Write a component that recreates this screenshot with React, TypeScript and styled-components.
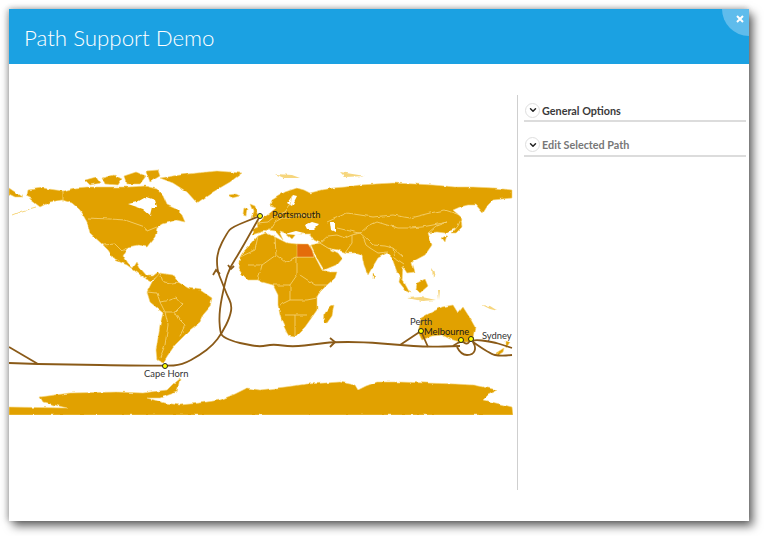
import styled, { createGlobalStyle } from "styled-components";
import { ChevronDown } from "lucide-react";

const GlobalStyle = createGlobalStyle`
  html, body {
    margin: 0;
    padding: 0;
    background: #fff;
    font-family: "Lato", "Liberation Sans", sans-serif;
  }
`;

const Page = styled.div`
  width: 764px;
  height: 536px;
  padding: 9px 15px 15px 9px;
  box-sizing: border-box;
  overflow: hidden;
`;

const Window = styled.div`
  width: 740px;
  height: 512px;
  background: #fff;
  display: flex;
  flex-direction: column;
  box-shadow: 4px 5px 9px rgba(0, 0, 0, 0.6), -3px 0 6px rgba(0, 0, 0, 0.16), 0 -2px 5px rgba(0, 0, 0, 0.12);
`;

const Header = styled.header`
  position: relative;
  height: 55px;
  flex: none;
  background: #1ba1e2;
  color: #fff;
  display: flex;
  align-items: center;
  padding: 1px 0 0 15px;
  box-sizing: border-box;
  overflow: hidden;
`;

const Title = styled.h1`
  margin: 0;
  font: 300 22.3px "Lato", sans-serif;
`;

const CloseCorner = styled.div`
  position: absolute;
  top: -27px;
  right: -27px;
  width: 54px;
  height: 54px;
  border-radius: 50%;
  background: #5fbcec;
  svg {
    position: absolute;
    left: 14px;
    top: 33px;
  }
`;

const Body = styled.div`
  flex: 1;
  display: flex;
  padding-top: 31px;
  padding-bottom: 31px;
`;

const MapColumn = styled.div`
  width: 508px;
  flex: none;
  padding-top: 70px;
  box-sizing: border-box;
`;

const MapArea = styled.div`
  position: relative;
  width: 504px;
  height: 250px;
  svg {
    display: block;
  }
`;

const PinLabel = styled.span<{ $x: number; $y: number; $dim?: boolean }>`
  position: absolute;
  left: ${({ $x }) => $x - 9}px;
  top: ${({ $y }) => $y - 165}px;
  font: 400 9.4px/12px "Lato", sans-serif;
  color: ${({ $dim }) => ($dim ? "#333" : "#1a1a1a")};
  white-space: nowrap;
`;

const SidePanel = styled.aside`
  flex: 1;
  border-left: 1px solid #cfcfcf;
  padding: 5px 3px 0 6px;
`;

const Section = styled.div`
  height: 34.5px;
`;

const SectionHead = styled.div<{ $muted?: boolean }>`
  display: flex;
  align-items: center;
  height: 20px;
  gap: 2px;
  border-bottom: 2px solid #dcdcdc;
  color: ${({ $muted }) => ($muted ? "#777" : "#3a3a3a")};
  font: 700 10.8px "Lato", sans-serif;
`;

const Toggle = styled.span`
  width: 13px;
  height: 13px;
  border: 1px solid #dedede;
  border-radius: 50%;
  display: flex;
  align-items: center;
  justify-content: center;
  color: #222;
  margin-left: 1px;
`;

const LAND = "#e1a100";
const COAST = "#f6d67e";
const ROUTE = "#8a5a18";

const land = [
  // north america
  "28,190 42,188 63,191 75,188 87,187 110,187 130,187 145,186 157,189 163,196 167,205 176,209 182,215 185,222 176,220 170,222 163,224 157,228 155,237 150,243 147,247 138,245 128,247 123,255 128,263 133,268 137,262 140,268 147,276 153,276 158,272 160,275 151,281 143,277 127,265 115,260 108,250 103,245 90,233 87,222 80,210 72,203 62,200 50,202 40,207 30,199 33,198 27,195",
  "9,188 15,192 23,197 15,197 9,194",
  // arctic islands
  "85,180 96,177 100,183 90,185",
  "102,178 114,175 122,179 118,185 105,184",
  "124,176 136,172 146,176 140,184 126,184",
  "146,171 158,170 160,176 150,182",
  // greenland
  "160,178 187,174 217,171 242,173 230,182 213,192 197,203 187,192 173,183",
  // south america
  "147,292 152,282 160,273 173,275 178,282 188,288 200,290 212,298 210,307 203,315 200,322 190,330 185,335 175,345 168,355 163,363 157,360 156,350 158,338 160,325 163,313 150,302",
  // africa
  "258,236 266,233 275,237 287,243 297,244 310,245 314,255 322,270 330,272 337,272 335,278 327,285 320,292 317,298 317,310 310,320 305,327 295,337 289,336 287,333 282,322 280,315 278,305 278,295 273,285 262,282 258,280 248,280 242,274 238,268 240,257 245,250 250,245",
  // arabia
  "311,245 320,243 328,248 338,253 342,258 336,265 324,270 318,260",
  // eurasia
  "252,235 253,229 258,227 257,223 262,219 270,213 276,208 270,206 272,200 285,192 297,188 304,190 310,193 322,190 333,188 345,187 360,185 375,184 393,183 415,184 433,185 455,187 473,187 495,188 512,190 512,198 493,200 488,205 483,213 476,205 468,205 460,207 453,210 462,218 457,228 445,233 437,232 428,233 432,245 425,255 412,262 415,272 407,273 403,267 402,281 397,272 392,258 387,253 378,258 372,268 368,275 364,265 362,255 358,253 347,253 338,250 328,248 320,243 314,240 310,234 296,234 292,239 285,233 279,231 283,240 275,231 268,230 261,232",
  // uk, ireland, iceland
  "250,204 255,206 258,216 251,218 253,212",
  "244,208 248,209 247,215 243,214",
  "228,195 236,194 240,196 232,198",
  // australia
  "421,318 430,313 442,307 453,305 458,313 463,307 470,318 475,327 473,338 470,342 460,342 450,339 442,335 432,336 422,340 418,332",
  // new zealand
  "506,341 510,342 506,348",
  "496,353 504,348 503,352 497,356",
  // madagascar
  "330,307 334,305 332,316 327,323 323,322 324,314",
  // antarctica
  "9,407 67,408 43,402 40,397 70,393 117,392 143,393 158,391 167,390 175,382 180,378 178,388 177,392 160,398 147,398 165,403 180,405 200,403 220,400 235,394 247,388 260,390 285,387 307,384 325,383 340,382 355,385 358,390 366,386 377,382 400,382 427,383 455,384 473,385 498,390 488,395 483,400 500,404 512,407 513,415 9,415",
  // japan, indonesia
  "442,238 447,235 445,242",
  "452,233 458,226 461,219 462,227 456,233",
  "400,277 405,284 410,293 406,291 399,282",
  "417,283 425,279 428,286 420,293 416,289",
  "373,274 375,276 373,279",
];

const paleIslands = [
  "275,174 292,175 300,178 284,178",
  "340,172 365,176 345,177",
  "407,298 422,297 436,300 422,301",
  "482,305 490,306 498,311 490,309",
  "438,290 440,290 439,300",
  "432,268 435,272 433,279",
  "158,350 163,347 162,360 159,361",
];

const borders = [
  "63,191 63,203",
  "87,218 110,219 125,220 145,227 147,231 157,227",
  "103,245 115,244 122,251 128,247",
  "160,273 163,282 172,283 178,282",
  "147,292 157,293 160,302 165,312 175,312 180,320 185,325 180,336",
  "160,302 170,300 176,298 182,305 175,312",
  "165,312 168,325 165,345 160,358",
  "258,236 255,250 240,257",
  "275,237 276,255 285,262 297,257",
  "262,265 276,255",
  "248,265 262,265 258,280",
  "297,257 297,275 290,285 276,285 273,285",
  "297,257 314,257",
  "300,275 315,285 327,285",
  "290,285 290,300 280,305",
  "290,300 307,300 317,298",
  "285,315 307,315",
  "295,315 295,336",
  "262,232 270,230 275,222 282,218 290,218 300,214 312,218 318,212",
  "257,223 268,222 275,216 285,212",
  "285,212 290,205 292,196",
  "327,222 336,218 347,213 360,215 373,217 393,215 410,218 430,213 445,210 460,215",
  "387,225 398,228 410,228 422,227 433,225 447,222",
  "377,222 387,225",
  "337,228 350,231 360,233 368,226 377,222",
  "360,233 368,240 373,245 385,246 393,248 403,257",
  "363,237 366,245 370,248 378,253 388,252",
  "345,253 352,243 352,235 360,233",
  "320,243 328,236 337,235 345,238 352,235",
  "393,248 395,258 404,264",
  "428,233 436,226 447,222",
];

const routes = [
  "9,347 38,364",
  "9,363 38,364 100,365",
  "400,345 421,331 428,347",
];

const curves = [
  "100,365 165,366 182,365 200,355 213,345 222,333 230,317 232,305 227,295 222,282 217,270 217,252 227,233 232,227 260,216",
  "260,216 240,252 230,267 225,282 219,312 220,332 223,337 235,342 245,344 260,347 273,344 292,347 317,344 333,342 363,342 400,345 427,347 460,346",
  "453,346 461,340 467,345 471,339",
  "457,347 461,355 473,355 476,347 471,339 493,342 503,345 512,348",
  "473,342 490,354 500,356 512,355",
];

const pins = [
  [260, 216],
  [165, 366],
  [421, 331],
  [461, 340],
  [471, 339],
];

// rounds the corners of a point list, going through the midpoints
const smooth = (points: string) => {
  const pts = points.split(" ").map((p) => p.split(",").map(Number));
  let d = `M${pts[0][0]} ${pts[0][1]}`;
  for (let i = 1; i < pts.length - 1; i++) {
    const mx = (pts[i][0] + pts[i + 1][0]) / 2;
    const my = (pts[i][1] + pts[i + 1][1]) / 2;
    d += `Q${pts[i][0]} ${pts[i][1]} ${mx} ${my}`;
  }
  const last = pts[pts.length - 1];
  return `${d}L${last[0]} ${last[1]}`;
};

const WorldMap = () => (
  <svg width="504" height="250" viewBox="9 165 504 250">
    <defs>
      <filter id="coast" x="-2%" y="-2%" width="104%" height="104%">
        <feTurbulence type="fractalNoise" baseFrequency="0.14" numOctaves="2" seed="4" result="noise" />
        <feDisplacementMap in="SourceGraphic" in2="noise" scale="3" xChannelSelector="R" yChannelSelector="G" />
      </filter>
    </defs>
    <g filter="url(#coast)">
      {paleIslands.map((p) => (
        <polygon key={p} points={p} fill={COAST} />
      ))}
      {land.map((p) => (
        <polygon key={p} points={p} fill={LAND} stroke={COAST} strokeWidth="0.6" />
      ))}
      {/* inland water */}
      <polygon points="128,204 137,202 146,197 155,200 157,207 152,207 150,215 143,209" fill="#fff" />
      <polygon points="305,225 312,222 319,224 314,229 307,229" fill="#fff" />
      <polygon points="330,222 335,222 335,232 331,230" fill="#fff" />
      <polygon points="285,234 296,231 304,233 296,235" fill="#fff" />
      <polygon points="287,203 293,195 297,196 292,206" fill="#fff" />
      <polyline points="12,215 22,211 36,207" fill="none" stroke={COAST} />
      {borders.map((p) => (
        <polyline key={p} points={p} fill="none" stroke={COAST} strokeWidth="0.8" />
      ))}
    </g>
    <polygon points="297,244 308,244 312,250 314,257 297,257" fill="#e46c0a" stroke={COAST} strokeWidth="0.5" />
    {routes.map((p) => (
      <polyline key={p} points={p} fill="none" stroke={ROUTE} strokeWidth="1.8" strokeLinejoin="round" />
    ))}
    {curves.map((p) => (
      <path key={p} d={smooth(p)} fill="none" stroke={ROUTE} strokeWidth="1.8" />
    ))}
    <polyline points="330,338 335,342 330,347" fill="none" stroke={ROUTE} strokeWidth="1.8" />
    <polyline points="213,275 216,270 220,274" fill="none" stroke={ROUTE} strokeWidth="1.8" />
    <polyline points="228,265 231,269 234,266" fill="none" stroke={ROUTE} strokeWidth="1.8" />
    {pins.map(([x, y]) => (
      <circle key={x} cx={x} cy={y} r="2.5" fill="#ffff00" stroke="#222" strokeWidth="1" />
    ))}
  </svg>
);

const App = () => (
  <Page>
    <GlobalStyle />
    <Window>
      <Header>
        <Title>Path Support Demo</Title>
        <CloseCorner>
          <svg width="8" height="8" viewBox="0 0 8 8">
            <path d="M1 1 7 7M7 1 1 7" stroke="#fff" strokeWidth="2" />
          </svg>
        </CloseCorner>
      </Header>
      <Body>
        <MapColumn>
          <MapArea>
            <WorldMap />
            <PinLabel $x={272} $y={209}>Portsmouth</PinLabel>
            <PinLabel $x={144} $y={368} $dim>Cape Horn</PinLabel>
            <PinLabel $x={410} $y={316} $dim>Perth</PinLabel>
            <PinLabel $x={424} $y={326}>Melbourne</PinLabel>
            <PinLabel $x={482} $y={330} $dim>Sydney</PinLabel>
          </MapArea>
        </MapColumn>
        <SidePanel>
          <Section>
            <SectionHead>
              <Toggle><ChevronDown size={10} strokeWidth={3.5} /></Toggle>
              General Options
            </SectionHead>
          </Section>
          <Section>
            <SectionHead $muted>
              <Toggle><ChevronDown size={10} strokeWidth={3.5} /></Toggle>
              Edit Selected Path
            </SectionHead>
          </Section>
        </SidePanel>
      </Body>
    </Window>
  </Page>
);

export default App;
